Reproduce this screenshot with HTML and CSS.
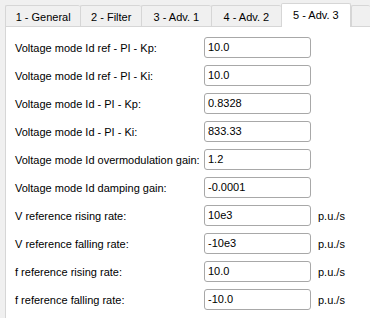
FILE: index.html
```html
<!DOCTYPE html>
<html>
<head>
<meta charset="utf-8">
<link rel="stylesheet" href="styles.css">
</head>
<body>
<div class="tabs">
  <div class="tab t1">1 - General</div>
  <div class="tab t2">2 - Filter</div>
  <div class="tab t3">3 - Adv. 1</div>
  <div class="tab t4">4 - Adv. 2</div>
  <div class="tab sel">5 - Adv. 3</div>
  <div class="tab t6"></div>
</div>
<div class="pane">
  <div class="form">
    <label>Voltage mode Id ref - PI - Kp:</label><div class="input">10.0</div><span></span>
    <label>Voltage mode Id ref - PI - Ki:</label><div class="input">10.0</div><span></span>
    <label>Voltage mode Id - PI - Kp:</label><div class="input">0.8328</div><span></span>
    <label>Voltage mode Id - PI - Ki:</label><div class="input">833.33</div><span></span>
    <label>Voltage mode Id overmodulation gain:</label><div class="input">1.2</div><span></span>
    <label>Voltage mode Id damping gain:</label><div class="input">-0.0001</div><span></span>
    <label>V reference rising rate:</label><div class="input">10e3</div><span class="unit">p.u./s</span>
    <label>V reference falling rate:</label><div class="input">-10e3</div><span class="unit">p.u./s</span>
    <label>f reference rising rate:</label><div class="input">10.0</div><span class="unit">p.u./s</span>
    <label>f reference falling rate:</label><div class="input">-10.0</div><span class="unit">p.u./s</span>
  </div>
</div>
</body>
</html>
```
FILE: styles.css
```css
html, body {
  margin: 0;
  padding: 0;
  background: #f0f0f0;
  overflow: hidden;
}
body {
  width: 370px;
  height: 318px;
  font-family: "Liberation Sans", Arial, sans-serif;
  font-size: 11px;
  color: #000;
}
.tabs {
  display: flex;
  align-items: flex-end;
  padding-left: 5px;
  height: 26px;
  position: relative;
  z-index: 1;
}
.tab {
  box-sizing: border-box;
  height: 21px;
  border: 1px solid #d6d6d6;
  border-bottom: none;
  border-right: none;
  background: #f0f0f0;
  display: flex;
  align-items: center;
  justify-content: center;
  padding-top: 1px;
  border-radius: 2px 2px 0 0;
  white-space: nowrap;
}
.t1 { width: 78px; }
.t2 { width: 63px; }
.t3 { width: 72px; }
.t4 { width: 73px; }
.tab.sel {
  width: 72px;
  height: 24px;
  margin-bottom: -1px;
  background: #fff;
  border-right: 1px solid #d6d6d6;
  padding-top: 0;
  padding-bottom: 1px;
}
.t6 { width: 20px; }
.pane {
  background: #fff;
  border-top: 1px solid #d6d6d6;
  border-left: 1px solid #d6d6d6;
  margin-left: 5px;
  height: 300px;
  box-sizing: border-box;
  padding: 10px 0 0 9px;
}
.form {
  display: grid;
  grid-template-columns: 189px 107px auto;
  row-gap: 7px;
  align-items: center;
}
.form label {
  white-space: nowrap;
}
.input {
  box-sizing: border-box;
  height: 21px;
  border: 1px solid #a8a8a8;
  border-radius: 3px;
  padding: 0 3px;
  line-height: 19px;
}
.unit {
  padding-left: 7px;
}
```
